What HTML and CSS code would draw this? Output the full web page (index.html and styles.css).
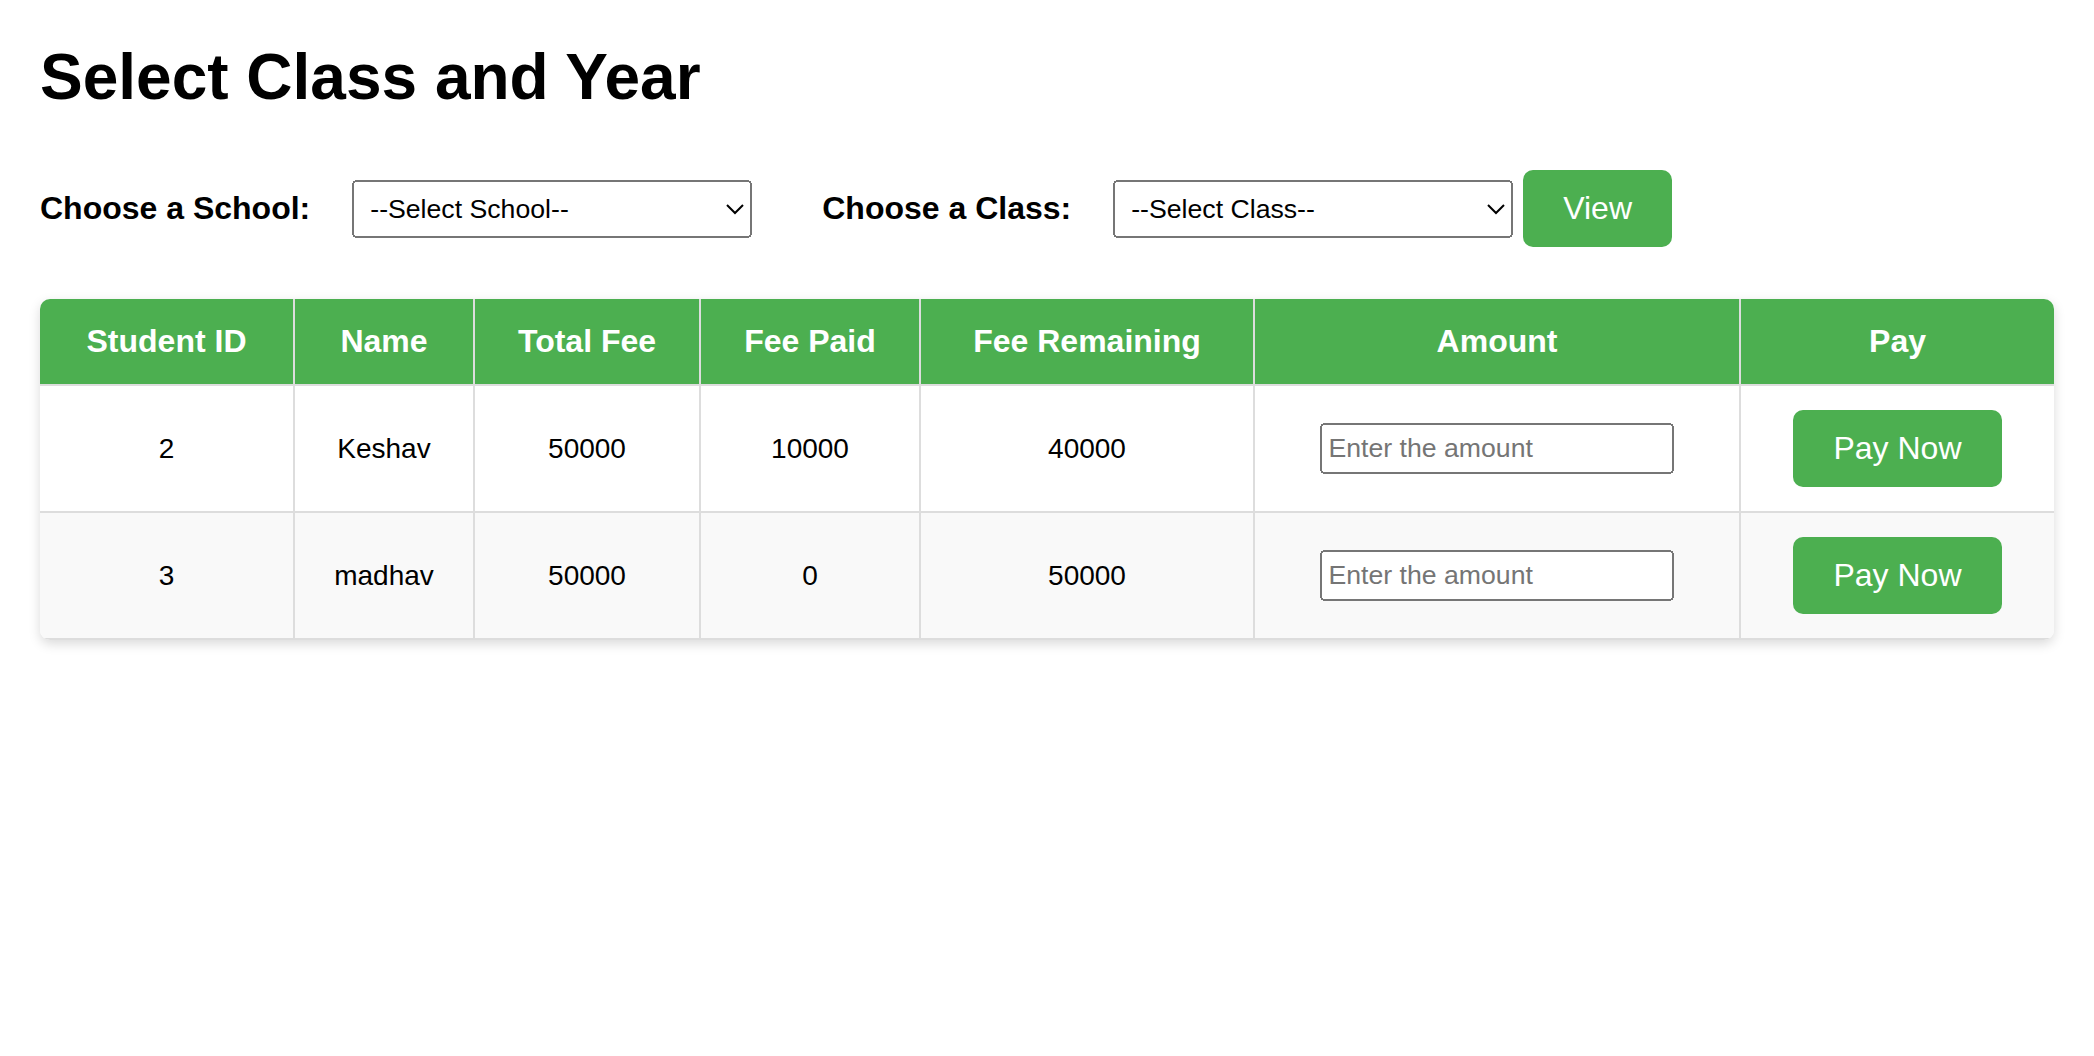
FILE: index.html
```html
<!DOCTYPE html>
<html lang="en">
<head>
<meta charset="utf-8">
<title>Select Class and Year</title>
<link rel="stylesheet" href="styles.css">
</head>
<body>
<div class="page">
  <h1 class="title">Select Class and Year</h1>
  <form class="filters">
    <label class="filter-label" for="school">Choose a School:</label>
    <select id="school" class="filter-select school-select">
      <option>--Select School--</option>
    </select>
    <label class="filter-label" for="klass">Choose a Class:</label>
    <select id="klass" class="filter-select class-select">
      <option>--Select Class--</option>
    </select>
    <button class="btn" type="button">View</button>
  </form>

  <div class="table-card">
    <table class="fee-table">
      <colgroup>
        <col class="c-id">
        <col class="c-name">
        <col class="c-total">
        <col class="c-paid">
        <col class="c-rem">
        <col class="c-amount">
        <col class="c-pay">
      </colgroup>
      <thead>
        <tr>
          <th>Student ID</th>
          <th>Name</th>
          <th>Total Fee</th>
          <th>Fee Paid</th>
          <th>Fee Remaining</th>
          <th>Amount</th>
          <th>Pay</th>
        </tr>
      </thead>
      <tbody>
        <tr>
          <td>2</td>
          <td>Keshav</td>
          <td>50000</td>
          <td>10000</td>
          <td>40000</td>
          <td><input class="amount-input" type="text" placeholder="Enter the amount"></td>
          <td><button class="btn" type="button">Pay Now</button></td>
        </tr>
        <tr>
          <td>3</td>
          <td>madhav</td>
          <td>50000</td>
          <td>0</td>
          <td>50000</td>
          <td><input class="amount-input" type="text" placeholder="Enter the amount"></td>
          <td><button class="btn" type="button">Pay Now</button></td>
        </tr>
      </tbody>
    </table>
  </div>
</div>
</body>
</html>
```

FILE: styles.css
```css
html {
  zoom: 2;
}

body {
  margin: 0;
  background: #fff;
  color: #000;
  font-family: "Liberation Sans", Arial, sans-serif;
}

.page {
  padding: 20px;
}

.title {
  margin: 0 0 28px;
  font-size: 32px;
  font-weight: bold;
  line-height: normal;
}

.filters {
  display: flex;
  align-items: center;
  margin-bottom: 26px;
}

.filter-label {
  margin-right: 21px;
  font-size: 16px;
  font-weight: bold;
}

.filter-select {
  width: 200px;
  padding: 5px 4px;
  font-family: "Liberation Sans", Arial, sans-serif;
  font-size: 13.333px;
  color: #000;
}

.school-select {
  margin-right: 35px;
}

.class-select {
  margin-right: 5px;
}

.btn {
  padding: 10px 20px;
  border: none;
  border-radius: 5px;
  background: #4caf50;
  color: #fff;
  font-family: "Liberation Sans", Arial, sans-serif;
  font-size: 16px;
  line-height: normal;
  cursor: pointer;
}

.table-card {
  border-radius: 5px;
  overflow: hidden;
  box-shadow: 0 2px 6px rgba(0, 0, 0, 0.15);
}

.fee-table {
  width: 100%;
  border-collapse: collapse;
  table-layout: fixed;
}

.c-id { width: 127px; }
.c-name { width: 90px; }
.c-total { width: 113px; }
.c-paid { width: 110px; }
.c-rem { width: 167px; }
.c-amount { width: 243px; }
.c-pay { width: 157px; }

.fee-table th,
.fee-table td {
  padding: 12px;
  text-align: center;
  border-bottom: 1px solid #ddd;
}

.fee-table th + th,
.fee-table td + td {
  border-left: 1px solid #ddd;
}

.fee-table th {
  background: #4caf50;
  color: #fff;
  font-size: 16px;
  font-weight: bold;
}

.fee-table td {
  font-size: 14px;
}

.fee-table tbody tr:nth-child(even) {
  background: #f9f9f9;
}

.amount-input {
  box-sizing: border-box;
  width: 81%;
  padding: 3px 2px;
  font-family: "Liberation Sans", Arial, sans-serif;
  font-size: 13.333px;
}
```
